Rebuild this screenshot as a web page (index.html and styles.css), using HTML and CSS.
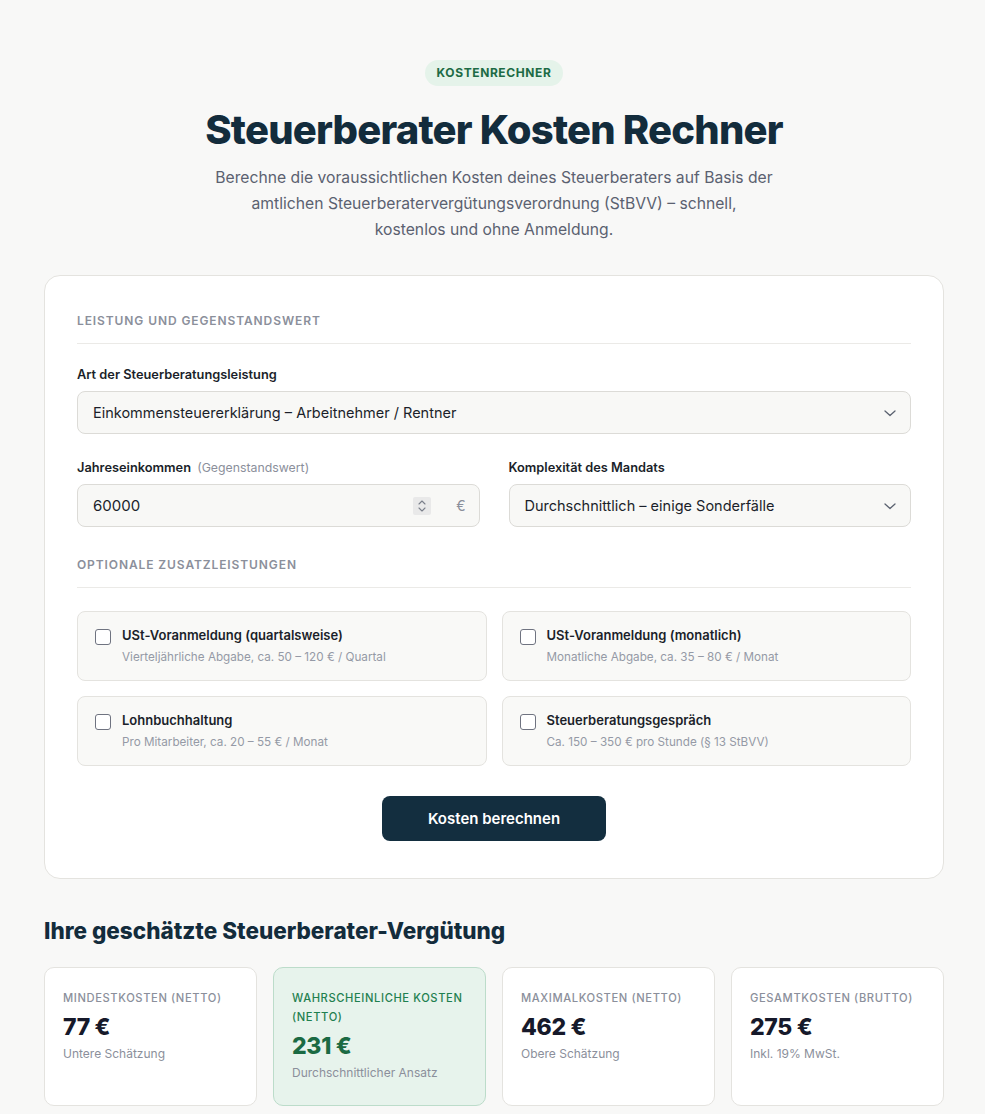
FILE: index.html
```html
<!DOCTYPE html>
<html lang="de">
<head>
<meta charset="utf-8">
<title>Steuerberater Kosten Rechner</title>
<link rel="stylesheet" href="styles.css">
</head>
<body>
<main class="page">
  <header class="hero">
    <span class="badge">KOSTENRECHNER</span>
    <h1>Steuerberater Kosten Rechner</h1>
    <p class="lead">Berechne die voraussichtlichen Kosten deines Steuerberaters auf Basis der amtlichen Steuerberatervergütungsverordnung (StBVV) – schnell,<br>kostenlos und ohne Anmeldung.</p>
  </header>

  <section class="card">
    <h2 class="section-title">LEISTUNG UND GEGENSTANDSWERT</h2>
    <div class="field">
      <label class="label">Art der Steuerberatungsleistung</label>
      <div class="control select">
        <span>Einkommensteuererklärung – Arbeitnehmer / Rentner</span>
        <svg class="chev" width="14" height="14" viewBox="0 0 14 14"><path d="M2 5l5 4.5L12 5" fill="none" stroke="#5b6270" stroke-width="1.3" stroke-linecap="round" stroke-linejoin="round"/></svg>
      </div>
    </div>
    <div class="row">
      <div class="field">
        <label class="label">Jahreseinkommen <span class="hint">(Gegenstandswert)</span></label>
        <div class="control number">
          <span>60000</span>
          <span class="spin"><svg width="10" height="16" viewBox="0 0 10 16"><path d="M2 6l3-3 3 3M2 10l3 3 3-3" fill="none" stroke="#7a7f8a" stroke-width="1.1" stroke-linecap="round" stroke-linejoin="round"/></svg></span>
          <span class="euro">€</span>
        </div>
      </div>
      <div class="field">
        <label class="label">Komplexität des Mandats</label>
        <div class="control select">
          <span>Durchschnittlich – einige Sonderfälle</span>
          <svg class="chev" width="14" height="14" viewBox="0 0 14 14"><path d="M2 5l5 4.5L12 5" fill="none" stroke="#5b6270" stroke-width="1.3" stroke-linecap="round" stroke-linejoin="round"/></svg>
        </div>
      </div>
    </div>

    <h2 class="section-title second">OPTIONALE ZUSATZLEISTUNGEN</h2>
    <div class="options">
      <div class="option"><span class="box"></span><div><div class="opt-title">USt-Voranmeldung (quartalsweise)</div><div class="opt-desc">Vierteljährliche Abgabe, ca. 50 – 120 € / Quartal</div></div></div>
      <div class="option"><span class="box"></span><div><div class="opt-title">USt-Voranmeldung (monatlich)</div><div class="opt-desc">Monatliche Abgabe, ca. 35 – 80 € / Monat</div></div></div>
      <div class="option"><span class="box"></span><div><div class="opt-title">Lohnbuchhaltung</div><div class="opt-desc">Pro Mitarbeiter, ca. 20 – 55 € / Monat</div></div></div>
      <div class="option"><span class="box"></span><div><div class="opt-title">Steuerberatungsgespräch</div><div class="opt-desc">Ca. 150 – 350 € pro Stunde (§ 13 StBVV)</div></div></div>
    </div>
    <div class="actions"><button class="btn">Kosten berechnen</button></div>
  </section>

  <section class="results">
    <h2 class="results-title">Ihre geschätzte Steuerberater-Vergütung</h2>
    <div class="stats">
      <div class="stat"><div class="stat-label">MINDESTKOSTEN (NETTO)</div><div class="stat-value">77 €</div><div class="stat-sub">Untere Schätzung</div></div>
      <div class="stat hl"><div class="stat-label">WAHRSCHEINLICHE KOSTEN (NETTO)</div><div class="stat-value">231 €</div><div class="stat-sub">Durchschnittlicher Ansatz</div></div>
      <div class="stat"><div class="stat-label">MAXIMALKOSTEN (NETTO)</div><div class="stat-value">462 €</div><div class="stat-sub">Obere Schätzung</div></div>
      <div class="stat"><div class="stat-label">GESAMTKOSTEN (BRUTTO)</div><div class="stat-value">275 €</div><div class="stat-sub">Inkl. 19% MwSt.</div></div>
    </div>
  </section>
</main>
</body>
</html>
```

FILE: styles.css
```css
* { box-sizing: border-box; }
html, body { margin: 0; padding: 0; }
body {
  background: #f8f8f7;
  font-family: Inter, "Noto Sans", sans-serif;
  color: #1b1f2a;
}
.page {
  width: 903px;
  margin: 0 auto;
  padding: 60px 0 40px 3px;
}
.hero {
  display: flex;
  flex-direction: column;
  align-items: center;
  text-align: center;
}
.badge {
  display: inline-block;
  background: #e5f3ea;
  color: #1d6b45;
  font-size: 12px;
  font-weight: 700;
  letter-spacing: 0.6px;
  padding: 6px 12px;
  border-radius: 14px;
  line-height: 14px;
}
h1 {
  margin: 20px 0 0;
  font-size: 40px;
  line-height: 48px;
  font-weight: 800;
  letter-spacing: -0.8px;
  color: #132c3c;
}
.lead {
  margin: 11px 0 0;
  width: 600px;
  font-size: 15.7px;
  line-height: 26px;
  color: #5b6170;
}
.card {
  margin-top: 32px;
  background: #fff;
  border: 1px solid #e4e3df;
  border-radius: 16px;
  padding: 38px 32px 37px;
}
.section-title {
  margin: 0;
  font-size: 12px;
  line-height: 14px;
  font-weight: 600;
  letter-spacing: 0.9px;
  color: #8b8f9b;
  padding-bottom: 15px;
  border-bottom: 1px solid #ebeae7;
}
.section-title.second { margin-top: 31px; }
.field { margin-top: 23px; }
.label {
  display: block;
  font-size: 12.8px;
  line-height: 16px;
  font-weight: 600;
  color: #1b1f2a;
  margin-bottom: 8px;
}
.hint { font-weight: 400; color: #8b8f9b; font-size: 12.3px; margin-left: 3px; }
.control {
  height: 43px;
  background: #f8f8f6;
  border: 1px solid #dcdbd7;
  border-radius: 8px;
  display: flex;
  align-items: center;
  padding: 0 13px 0 15px;
  font-size: 14.5px;
  color: #1b1f2a;
}
.control > span:first-child { flex: 1; }
.chev { flex: none; }
.row {
  display: grid;
  grid-template-columns: 1fr 1fr;
  column-gap: 29px;
  margin-top: 3px;
}
.spin {
  width: 18px; height: 18px;
  background: #e9e9e9;
  border-radius: 2px;
  display: flex; align-items: center; justify-content: center;
  margin-right: 25px;
}
.euro { color: #8b8f9b; font-size: 14px; }
.number { padding-right: 13px; font-size: 15px; }
.options {
  margin-top: 23px;
  display: grid;
  grid-template-columns: 1fr 1fr;
  gap: 15px;
}
.option {
  height: 70px;
  background: #f9f9f7;
  border: 1px solid #e4e3df;
  border-radius: 8px;
  display: flex;
  align-items: flex-start;
  padding: 14px 17px;
  gap: 11px;
}
.box {
  flex: none;
  width: 16px; height: 16px;
  margin-top: 3px;
  border: 1px solid #6f7380;
  border-radius: 3px;
  background: #fff;
}
.opt-title { font-size: 13px; line-height: 18px; font-weight: 600; color: #1b1f2a; }
.opt-desc { margin-top: 5px; font-size: 11.7px; line-height: 16px; color: #959aa6; }
.actions { display: flex; justify-content: center; margin-top: 30px; }
.btn {
  width: 224px; height: 45px;
  border: none;
  border-radius: 8px;
  background: #132e3f;
  color: #fff;
  font-family: inherit;
  font-size: 15px;
  font-weight: 600;
}
.results { margin-top: 38px; }
.results-title {
  margin: 0;
  font-size: 22.5px;
  line-height: 28px;
  font-weight: 800;
  letter-spacing: 0;
  color: #132c3c;
}
.stats {
  margin-top: 22px;
  display: grid;
  grid-template-columns: repeat(4, 1fr);
  gap: 16px;
}
.stat {
  background: #fff;
  border: 1px solid #e4e3df;
  border-radius: 10px;
  padding: 21px 18px 24px;
  min-height: 134px;
}
.stat-label { font-size: 11.2px; line-height: 19px; letter-spacing: 0.6px; color: #8b8f9b; font-weight: 500; }
.stat-value { margin-top: 6px; font-size: 23px; line-height: 26px; font-weight: 800; color: #16192a; letter-spacing: -0.3px; }
.stat-sub { margin-top: 6px; font-size: 12px; line-height: 16px; color: #8b8f9b; }
.stat.hl { background: #e7f3ec; border-color: #bcdcca; }
.stat.hl .stat-label { color: #1f8050; }
.stat.hl .stat-value { color: #1b6a43; }
```
